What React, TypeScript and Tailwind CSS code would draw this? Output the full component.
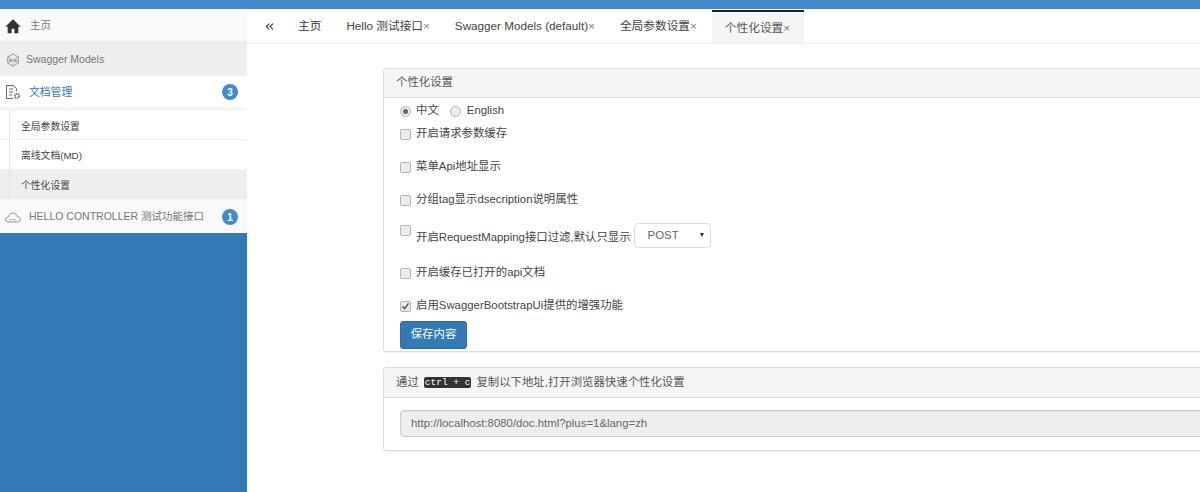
import React from 'react';
import { ChevronsLeft } from 'lucide-react';

const tabs = ['Hello 测试接口', 'Swagger Models (default)', '全局参数设置'];

const Badge = ({ n }: { n: number }) => (
  <span className="ml-auto w-4 h-4 rounded-full bg-[#428bca] text-white text-[10px] font-bold flex items-center justify-center">{n}</span>
);

const Check = ({ label, checked, className }: { label: string; checked?: boolean; className?: string }) => (
  <div className={`flex items-center h-[20px] ${className || ''}`}>
    <span className="w-[11px] h-[11px] mr-[5px] rounded-[2px] border border-[#b4b4b4] bg-[#ececec] flex items-center justify-center shrink-0">
      {checked && (
        <svg viewBox="0 0 12 12" className="w-[10px] h-[10px]">
          <path d="M2 6.5 L5 9.5 L10 2.5" fill="none" stroke="#555" strokeWidth="2" />
        </svg>
      )}
    </span>
    <span>{label}</span>
  </div>
);

const SubItem = ({ label, active, h }: { label: string; active?: boolean; h: string }) => (
  <div className={`${h} ${active ? 'bg-[#eee]' : 'border-b border-[#f0f0f0]'}`}>
    <div className="ml-[9px] h-full pl-[11px] border-l border-[#e4e4e4] flex items-center pt-[4px]">{label}</div>
  </div>
);

export default function App() {
  return (
    <div className="w-[1200px] h-[492px] overflow-hidden flex flex-col bg-white text-[11.4px] text-[#333] font-['Liberation_Sans','Noto_Sans_CJK_SC',sans-serif]">
      <div className="h-[9px] bg-[#428bca] shrink-0" />
      <div className="flex flex-1 min-h-0">
        {/* Sidebar */}
        <aside className="w-[247px] shrink-0 bg-[#337ab7] flex flex-col text-[10.5px]">
          <div className="h-[33px] bg-[#f9f9f9] border-b border-[#eee] flex items-center pl-[5px] pt-px text-[#777]">
            <svg viewBox="0 0 24 24" className="w-[16px] h-[16px] mr-[9px]">
              <path d="M12 2 L0.5 13 L4 13 L4 23 L10 23 L10 16 L14 16 L14 23 L20 23 L20 13 L23.5 13 Z" fill="#333" />
            </svg>
            主页
          </div>
          <div className="h-[34px] bg-[#eee] flex items-center pl-[6px] pt-px text-[#777]">
            <svg viewBox="0 0 16 16" className="w-[14px] h-[14px] mr-[6px]" fill="none" stroke="#999" strokeWidth="1.2">
              <path d="M8 1 L14 4.5 L14 11.5 L8 15 L2 11.5 L2 4.5 Z" />
              <path d="M2 4.5 L8 8 L14 4.5 M8 8 L8 15" strokeDasharray="1.5 1" />
              <circle cx="5" cy="9" r="1" fill="#999" />
              <circle cx="11" cy="9" r="1" fill="#999" />
            </svg>
            Swagger Models
          </div>
          <div className="h-[31px] bg-white flex items-center pl-[5px] pr-[9px] pt-[1px] text-[#337ab7] text-[10.8px]">
            <svg viewBox="0 0 16 16" className="w-[16px] h-[16px] mr-[8px]" fill="none" stroke="#5b6b7b" strokeWidth="1">
              <path d="M8 14.5 L1.5 14.5 L1.5 1.5 L8 1.5 L11.5 4.5 L11.5 7" />
              <path d="M4 5 H8 M4 8 H8 M4 11 H7" />
              <circle cx="12" cy="12" r="2.2" strokeWidth="1.6" strokeDasharray="1.4 0.6" />
            </svg>
            文档管理
            <Badge n={3} />
          </div>
          <div className="h-[92px] bg-white border-t-[4px] border-[#f5f5f5] text-[9.8px] text-[#444]">
            <SubItem label="全局参数设置" h="h-[29px]" />
            <SubItem label="离线文档(MD)" h="h-[30px]" />
            <SubItem label="个性化设置" h="h-[29px]" active />
          </div>
          <div className="h-[34px] bg-[#f9f9f9] flex items-center pl-[5px] pr-[9px] pt-[2px] text-[#777]">
            <svg viewBox="0 0 18 12" className="w-[16px] h-[11px] mr-[8px]" fill="none" stroke="#777" strokeWidth="0.9">
              <path d="M4 11 C1.5 11 0.6 9.5 0.6 8.2 C0.6 6.6 2 5.4 3.5 5.6 C4 3 6.5 1 9 1 C11.6 1 13.6 2.8 14 5.2 C16 5.3 17.4 6.6 17.4 8.2 C17.4 9.8 16 11 14 11 Z" />
              <path d="M5.5 8.5 H12.5" strokeWidth="1" strokeDasharray="1 0.6" />
            </svg>
            HELLO CONTROLLER 测试功能接口
            <Badge n={1} />
          </div>
        </aside>

        {/* Main */}
        <main className="flex-1 min-w-0 overflow-hidden">
          <div className="h-[35px] flex items-center border-b border-[#f0f0f0] text-[11.7px]">
            <ChevronsLeft size={13} strokeWidth={2} className="ml-[16px] text-[#444]" />
            <span className="ml-[22px] text-[#333]">主页</span>
            {tabs.map((t) => (
              <span key={t} className="whitespace-nowrap text-[#444] ml-[25px]">
                {t}<span className="text-[#777]">×</span>
              </span>
            ))}
            <span className="ml-[15px] self-end h-[33px] pl-[13px] pr-[14px] flex items-center border-t-2 border-[#222] bg-[#f5f5f5] text-[#555] whitespace-nowrap">
              个性化设置<span className="text-[#777]">×</span>
            </span>
          </div>

          <div className="pl-[136px] pt-[24px]">
            <section className="w-[900px] h-[284px] rounded-[3px] border border-[#ddd] shadow-[0_1px_1px_rgba(0,0,0,0.05)]">
              <div className="h-[29px] bg-[#f5f5f5] border-b border-[#ddd] flex items-center pl-[12px] text-[#555]">个性化设置</div>
              <div className="pl-[16px] text-[#444]">
                <div className="flex items-center h-[24px] mt-px">
                  <span className="w-[11px] h-[11px] mr-[5px] rounded-full border border-[#b4b4b4] bg-[#ececec] flex items-center justify-center">
                    <span className="w-[5px] h-[5px] rounded-full bg-[#666]" />
                  </span>
                  <span>中文</span>
                  <span className="w-[11px] h-[11px] ml-[11px] mr-[6px] rounded-full border border-[#b4b4b4] bg-[#ececec]" />
                  <span>English</span>
                </div>
                <Check label="开启请求参数缓存" className="mt-px" />
                <Check label="菜单Api地址显示" className="mt-[13px]" />
                <Check label="分组tag显示dsecription说明属性" className="mt-[13px]" />
                <div className="flex items-start h-[25px] mt-[13px]">
                  <span className="w-[11px] h-[11px] mr-[5px] mt-[2px] rounded-[2px] border border-[#b4b4b4] bg-[#ececec] shrink-0" />
                  <span className="mt-[6px]">开启RequestMapping接口过滤,默认只显示</span>
                  <span className="ml-[3px] w-[77px] h-[25px] rounded-[4px] border border-[#ddd] bg-white flex items-center pl-[13px] text-[#666] relative">
                    POST
                    <span className="absolute right-[6px] top-[9px] border-x-[2.5px] border-t-[4px] border-x-transparent border-t-[#333]" />
                  </span>
                </div>
                <Check label="开启缓存已打开的api文档" className="mt-[15px]" />
                <Check label="启用SwaggerBootstrapUi提供的增强功能" checked className="mt-[13px]" />
                <button className="mt-[5px] w-[67px] h-[28px] rounded-[3px] bg-[#337ab7] border border-[#2e6da4] text-white text-[11.4px]">保存内容</button>
              </div>
            </section>

            <section className="mt-[15px] w-[900px] h-[84px] rounded-[3px] border border-[#ddd] shadow-[0_1px_1px_rgba(0,0,0,0.05)]">
              <div className="h-[30px] bg-[#f5f5f5] border-b border-[#ddd] flex items-center pl-[12px] text-[#555]">
                通过
                <code className="mx-[5px] px-px bg-[#333] text-white rounded-[2px] text-[9.5px] leading-[11px] font-['Liberation_Mono',monospace]">ctrl + c</code>
                复制以下地址,打开浏览器快速个性化设置
              </div>
              <div className="pl-[16px] pt-[12px]">
                <div className="h-[27px] rounded-[4px] border border-[#ccc] bg-[#eee] flex items-center pl-[10px] text-[#666] shadow-[inset_0_1px_1px_rgba(0,0,0,0.075)]">
                  http://localhost:8080/doc.html?plus=1&amp;lang=zh
                </div>
              </div>
            </section>
          </div>
        </main>
      </div>
    </div>
  );
}
